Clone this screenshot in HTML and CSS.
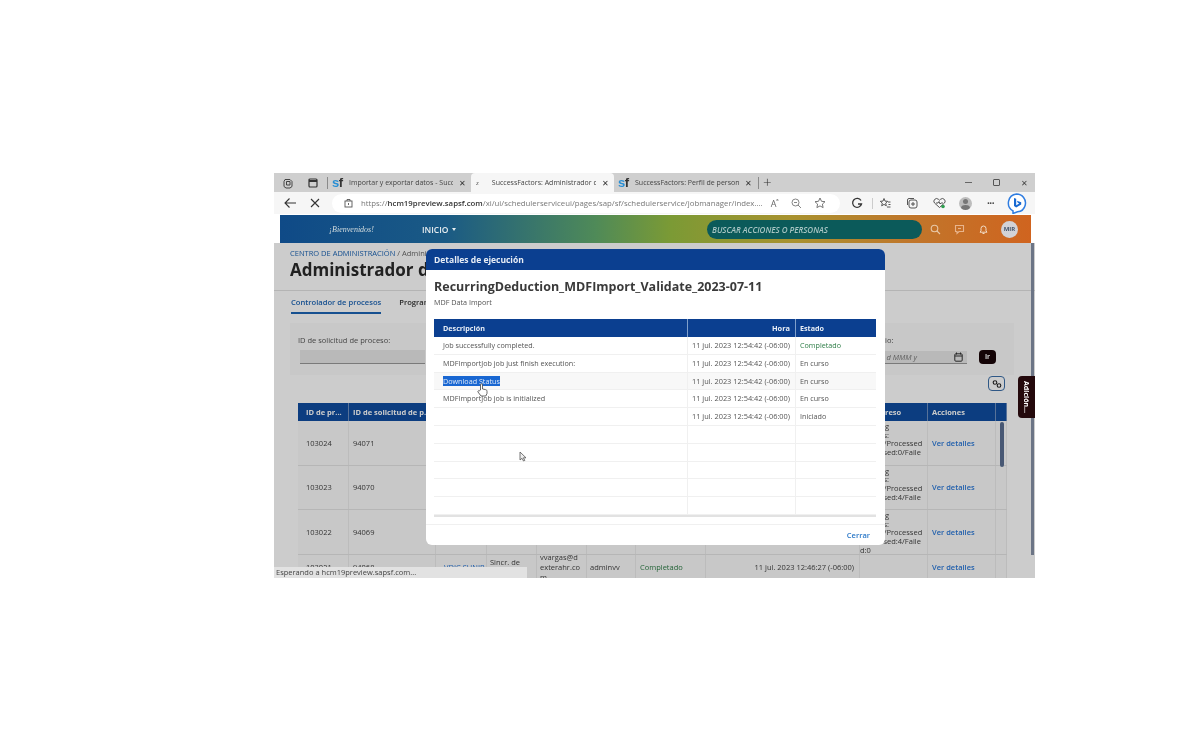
FILE: index.html
```html
<!DOCTYPE html>
<html>
<head>
<meta charset="UTF-8">
<title>SuccessFactors: Administrador de procesos</title>
<link rel="stylesheet" href="styles.css">
</head>
<body>

<div class="window">

  <!-- tab strip -->
  <div class="tabstrip">
    <svg class="tool" width="12" height="12" viewBox="0 0 12 12" fill="none" stroke="#444" stroke-width="1"><path d="M3 2.500h5l2 2v5l-2 1.500H4L2 9.500v-5z"/><path d="M4.500 4.500h3.500v3.500h-3.500z"/></svg>
    <svg class="tool tool-wide" width="12" height="12" viewBox="0 0 12 12" fill="none" stroke="#333" stroke-width="1.200"><rect x="2" y="2" width="8" height="8" rx="1"/><path d="M2 4h8" stroke-width="2"/></svg>
    <span class="tab-sep"></span>
    <div class="tab">
      <span class="sf"><i>s</i><b>f</b></span>
      <span class="tab-name">Importar y exportar datos - Succ</span>
      <span class="tab-x">✕</span>
    </div>
    <div class="tab tab-active">
      <span class="sf-small">z</span>
      <span class="tab-name">SuccessFactors: Administrador d</span>
      <span class="tab-x">✕</span>
    </div>
    <div class="tab">
      <span class="sf"><i>s</i><b>f</b></span>
      <span class="tab-name">SuccessFactors: Perfil de person</span>
      <span class="tab-x">✕</span>
    </div>
    <span class="tab-sep tab-sep-end"></span>
    <span class="tab-plus">+</span>
    <div class="winctl">
      <span class="min"></span>
      <span class="max"></span>
      <span class="close">✕</span>
    </div>
  </div>

  <!-- address bar -->
  <div class="addressbar">
    <svg width="14" height="12" viewBox="0 0 14 12" fill="none" stroke="#333" stroke-width="1.100"><path d="M13 6H2M6.500 1.500L2 6l4.500 4.500"/></svg>
    <svg class="stop" width="10" height="10" viewBox="0 0 10 10" fill="none" stroke="#333" stroke-width="1.100"><path d="M1 1l8 8M9 1L1 9"/></svg>
    <div class="url">
      <svg width="9" height="10" viewBox="0 0 9 10" fill="none" stroke="#555" stroke-width=".9"><rect x="1" y="3" width="7" height="6"/><path d="M3 3V1.500h3V3M4.500 5v2"/></svg>
      <span class="url-text">https://<b>hcm19preview.sapsf.com</b>/xi/ui/schedulerserviceui/pages/sap/sf/schedulerservice/jobmanager/index....</span>
      <span class="url-icons">
        <span class="readaloud">A<sup>ᵃ</sup></span>
        <svg width="11" height="11" viewBox="0 0 11 11" fill="none" stroke="#777" stroke-width=".9"><circle cx="4.500" cy="4.500" r="3.500"/><path d="M7 7l3 3M3 4.500h3"/></svg>
        <svg width="12" height="12" viewBox="0 0 12 12" fill="none" stroke="#666" stroke-width=".9"><path d="M6 1l1.500 3.300 3.500.4-2.600 2.400.7 3.500L6 8.900l-3.100 1.700.7-3.500L1 4.700l3.500-.4z"/></svg>
      </span>
    </div>
    <div class="toolbar">
      <svg width="12" height="12" viewBox="0 0 12 12" fill="none" stroke="#333" stroke-width="1.300"><path d="M10 3.500A4.500 4.500 0 1 0 10.500 7H7"/></svg>
      <span class="bar-sep"></span>
      <svg class="fav" width="12" height="12" viewBox="0 0 12 12" fill="none" stroke="#444" stroke-width=".9"><path d="M5 1.500l1 2.600 2.700.2-2 1.800.6 2.700L5 7.400 2.700 8.800l.6-2.700-2-1.800 2.700-.2zM9 5h2.500M9.500 7.500h2M8 10h3.500"/></svg>
      <svg width="12" height="12" viewBox="0 0 12 12" fill="none" stroke="#444" stroke-width=".9"><rect x="3" y="3" width="8" height="8" rx="2"/><path d="M7 5v4M5 7h4M1.500 8V3A1.500 1.500 0 0 1 3 1.500h5"/></svg>
      <svg width="13" height="12" viewBox="0 0 13 12" fill="none" stroke="#444" stroke-width=".9"><path d="M6.500 10.500L1.500 6a2.700 2.700 0 0 1 3.800-3.800l1.200 1 1.200-1A2.700 2.700 0 0 1 11.500 6z"/><path d="M3 6h2l1-1.500L7 7l1-1h2"/><circle cx="10" cy="9.500" r="1.800" fill="#2f9e4f" stroke="none"/></svg>
      <span class="profile"><i></i><b></b></span>
      <span class="dots">···</span>
      <span class="bing">
        <svg width="21" height="21" viewBox="0 0 21 21"><path d="M10.500 1a9 9 0 0 1 8.700 11.200c-.9 3.600-4 6.200-7.700 6.500L7 20.500v-2.700A9 9 0 0 1 10.500 1z" fill="#fff" stroke="#2f7de1" stroke-width="1.500"/><path d="M8 5l2.200.8v6.400l3-1.700-1.400-.7-.9-2.100 4.300 1.500v2.300l-5 2.900L8 13z" fill="#1769d2"/></svg>
      </span>
    </div>
  </div>

  <!-- sap header -->
  <div class="siteheader">
    <span class="welcome">¡Bienvenidos!</span>
    <span class="inicio">INICIO <i></i></span>
    <div class="search">BUSCAR ACCIONES O PERSONAS</div>
    <div class="header-icons">
      <svg width="11" height="11" viewBox="0 0 11 11" fill="none" stroke="#e8c9a8" stroke-width="1.100"><circle cx="4.500" cy="4.500" r="3.300"/><path d="M7 7l3 3"/></svg>
      <svg width="11" height="11" viewBox="0 0 11 11" fill="none" stroke="#e8b48c" stroke-width="1.100"><path d="M1.500 1.500h8v6H5L3 9.500v-2H1.500z"/><path d="M4 4.500h3"/></svg>
      <svg width="11" height="11" viewBox="0 0 11 11" fill="none" stroke="#f2ddc8" stroke-width="1"><path d="M2 8.200h7L8 6.800V4.500a2.500 2.500 0 0 0-5 0v2.300zM4.500 9.500h2"/></svg>
      <span class="avatar">MIR</span>
    </div>
  </div>

  <!-- page behind the dialog -->
  <div class="page">
    <div class="breadcrumb"><span>CENTRO DE ADMINISTRACIÓN</span> / Administrador de procesos</div>
    <h1 class="pagetitle">Administrador de procesos</h1>
    <div class="tabs">
      <span class="pagetab pagetab-on">Controlador de procesos</span>
      <span class="pagetab">Programador de procesos</span>
    </div>
    <div class="filters">
      <div class="filter">
        <label>ID de solicitud de proceso:</label>
        <div class="input"></div>
      </div>
      <div class="filter filter-date">
        <label>Fecha de inicio:</label>
        <div class="date-row">
          <div class="input input-date"><em>d MMM y</em>
            <svg width="9" height="10" viewBox="0 0 9 10" fill="none" stroke="#333" stroke-width="1"><rect x=".8" y="1.800" width="7.400" height="7.400" rx="1"/><path d="M.8 4h7.400M2.500.5v2M6.500.5v2"/></svg>
          </div>
          <span class="go">Ir</span>
        </div>
      </div>
    </div>
    <div class="tablebar">
      <span class="linkbtn">
        <svg width="12" height="10" viewBox="0 0 12 10" fill="none" stroke="#222" stroke-width="1.100"><circle cx="4" cy="3.500" r="1.800"/><circle cx="8" cy="6.500" r="1.800"/></svg>
      </span>
    </div>
    <div class="jobs">
      <div class="jobs-row jobs-head">
        <span>ID de pr...</span><span>ID de solicitud de p...</span><span></span><span></span><span></span><span></span><span></span><span></span><span>Progreso</span><span>Acciones</span><span></span>
      </div>
      <div class="jobs-row job">
        <span>103024</span><span>94071</span><span></span><span></span><span></span><span></span><span></span><span></span>
        <span class="job-progress">Running<br>process:<br>Total:0/Processed<br>Processed:0/Faile</span>
        <span class="job-link">Ver detalles</span><span></span>
      </div>
      <div class="jobs-row job">
        <span>103023</span><span>94070</span><span></span><span></span><span></span><span></span><span></span><span></span>
        <span class="job-progress">Running<br>process:<br>Total:4/Processed<br>Processed:4/Faile</span>
        <span class="job-link">Ver detalles</span><span></span>
      </div>
      <div class="jobs-row job">
        <span>103022</span><span>94069</span><span></span><span></span><span></span><span></span><span></span><span></span>
        <span class="job-progress">Running<br>process:<br>Total:4/Processed<br>Processed:4/Faile<br>d:0</span>
        <span class="job-link">Ver detalles</span><span></span>
      </div>
      <div class="jobs-row job job-last">
        <span>103021</span><span>94068</span><span class="job-blue">VDIC SUNIP</span><span class="job-tight">Sincr. de<br>datos</span>
        <span class="job-tight">vvargas@d<br>exterahr.co<br>m</span><span class="job-tight">adminvv</span><span class="job-green">Completado</span>
        <span class="job-date">11 jul. 2023 12:46:27 (-06:00)</span><span></span>
        <span class="job-link">Ver detalles</span><span></span>
      </div>
    </div>
    <div class="jobs-scroll"></div>
    <div class="page-scroll"></div>
    <div class="side-tab">Adición...</div>
    <div class="status">Esperando a hcm19preview.sapsf.com...</div>
    <div class="dim"></div>
  </div>

  <!-- dialog -->
  <div class="dialog">
    <div class="dialog-head">Detalles de ejecución</div>
    <div class="dialog-body">
      <h2 class="dialog-title">RecurringDeduction_MDFImport_Validate_2023-07-11</h2>
      <div class="dialog-sub">MDF Data Import</div>
      <div class="log">
        <div class="log-row log-head"><span>Descripción</span><span class="log-time">Hora</span><span>Estado</span></div>
        <div class="log-row"><span>Job successfully completed.</span><span class="log-time">11 jul. 2023 12:54:42 (-06:00)</span><span class="ok">Completado</span></div>
        <div class="log-row"><span>MDFImportJob job just finish execution:</span><span class="log-time">11 jul. 2023 12:54:42 (-06:00)</span><span>En curso</span></div>
        <div class="log-row log-hover"><span><mark>Download Status</mark></span><span class="log-time">11 jul. 2023 12:54:42 (-06:00)</span><span>En curso</span></div>
        <div class="log-row"><span>MDFImportJob job is initialized</span><span class="log-time">11 jul. 2023 12:54:42 (-06:00)</span><span>En curso</span></div>
        <div class="log-row"><span></span><span class="log-time">11 jul. 2023 12:54:42 (-06:00)</span><span>Iniciado</span></div>
        <div class="log-row"><span></span><span></span><span></span></div>
        <div class="log-row"><span></span><span></span><span></span></div>
        <div class="log-row"><span></span><span></span><span></span></div>
        <div class="log-row"><span></span><span></span><span></span></div>
        <div class="log-row"><span></span><span></span><span></span></div>
      </div>
      <div class="log-end"></div>
    </div>
    <div class="dialog-foot"><span>Cerrar</span></div>
  </div>

  <!-- pointers from the recording -->
  <svg class="hand" width="11" height="14" viewBox="0 0 11 14" fill="#fff" stroke="#444" stroke-width=".8"><path d="M3.500 7V1.800a1 1 0 0 1 2 0V6l3 .6c1 .2 1.500.8 1.500 1.800v2L8.800 13H4L1 9c-.5-.8.500-1.700 1.200-1.100z"/></svg>
  <svg class="arrow" width="8" height="11" viewBox="0 0 8 11" fill="#eee" stroke="#555" stroke-width=".8"><path d="M1 1v8l2-1.700L4.500 10l1.300-.6L4.400 6.800H7z"/></svg>
</div>

</body>
</html>
```
FILE: styles.css
```css
html, body {
  margin: 0;
  height: 100%;
  background: white;
  overflow: hidden;
}
body {
  padding: 173px 0 0 274px;
  box-sizing: border-box;
  font-family: "Open Sans", "Liberation Sans", sans-serif;
}
.window {
  position: relative;
  width: 761px;
  height: 405px;
  overflow: hidden;
  display: flex;
  flex-direction: column;
  background: #fff;
  filter: blur(0.5px);
}

/* tab strip */
.tabstrip {
  height: 19px;
  flex: none;
  display: flex;
  align-items: center;
  background: #cfcfcf;
  color: #444;
  font-size: 7px;
}
.tool { margin-left: 8px; }
.tool-wide { margin-left: 13px; }
.tab-sep {
  width: 1px;
  height: 12px;
  margin-left: 8px;
  background: #8a8a8a;
}
.tab-sep-end { margin-left: 1px; }
.tab {
  width: 143px;
  height: 19px;
  box-sizing: border-box;
  padding-left: 4px;
  display: flex;
  align-items: center;
  white-space: nowrap;
}
.tab-active {
  background: #f6f6f6;
  border-radius: 4px 4px 0 0;
  padding-left: 5px;
}
.tab-name {
  flex: 1;
  overflow: hidden;
  margin-left: 5px;
}
.tab-active .tab-name { margin-left: 13px; }
.tab-x {
  width: 18px;
  font-size: 8px;
  color: #333;
  text-align: center;
}
.sf {
  width: 12px;
  font-family: "Liberation Sans", sans-serif;
  font-size: 13px;
  line-height: 1;
  font-weight: 700;
  letter-spacing: -0.5px;
}
.sf i { font-style: normal; color: #2a8fd4; }
.sf b { color: #333; }
.sf-small { font-size: 6px; }
.tab-plus {
  margin-left: 4px;
  font-size: 15px;
  font-weight: 300;
  line-height: 1;
  color: #333;
}
.winctl {
  margin-left: auto;
  display: flex;
  align-items: center;
  gap: 21px;
  padding-right: 7px;
}
.winctl .min {
  width: 7px;
  height: 1px;
  background: #666;
}
.winctl .max {
  width: 5px;
  height: 5px;
  border: 1px solid #555;
  border-radius: 1px;
}
.winctl .close { font-size: 8px; color: #444; }

/* address bar */
.addressbar {
  height: 22px;
  flex: none;
  display: flex;
  align-items: center;
  padding-left: 9px;
  background: #f6f6f6;
}
.stop { margin-left: 13px; }
.url {
  width: 508px;
  height: 19px;
  margin-left: 12px;
  padding-left: 12px;
  box-sizing: border-box;
  display: flex;
  align-items: center;
  background: #fff;
  border-radius: 10px;
}
.url-text {
  margin-left: 8px;
  font-size: 7.800px;
  color: #777;
  white-space: nowrap;
}
.url-text b { font-weight: 600; color: #333; }
.url-icons {
  margin-left: 8px;
  display: flex;
  align-items: center;
  gap: 12px;
}
.readaloud { font-size: 9px; color: #666; line-height: 1; }
.readaloud sup { font-size: 6px; }
.toolbar {
  margin-left: 11px;
  display: flex;
  align-items: center;
  gap: 15px;
}
.bar-sep {
  width: 1px;
  height: 11px;
  margin: 0 -6px;
  background: #ccc;
}
.fav { margin-left: -3px; }
.profile {
  width: 13px;
  height: 13px;
  margin-left: -2px;
  border-radius: 50%;
  background: #bdbdbd;
  position: relative;
  overflow: hidden;
}
.profile i {
  position: absolute;
  left: 4px;
  top: 2px;
  width: 5px;
  height: 5px;
  border-radius: 50%;
  background: #777;
}
.profile b {
  position: absolute;
  left: 2px;
  top: 8px;
  width: 9px;
  height: 6px;
  border-radius: 50%;
  background: #777;
}
.dots { font-size: 10px; font-weight: 700; color: #444; letter-spacing: -.5px; }
.bing { margin-left: -3px; display: flex; }

/* sap header */
.siteheader {
  height: 28px;
  flex: none;
  margin: 1px 4px 0 6px;
  display: flex;
  align-items: center;
  background: linear-gradient(90deg, #0f4a87 0%, #1a5a85 22%, #4f8a58 42%, #7b9a35 52%, #a8922f 68%, #c0762b 84%, #d0641f 100%);
  color: #e7edf0;
}
.welcome {
  width: 45px;
  margin-left: 49px;
  font-family: "Liberation Serif", serif;
  font-style: italic;
  font-size: 8px;
  white-space: nowrap;
  color: #d7dfe0;
}
.inicio {
  width: 35px;
  margin-left: 48px;
  font-size: 8.500px;
  font-weight: 600;
  display: flex;
  align-items: center;
  gap: 3px;
}
.inicio i {
  border: 2.500px solid transparent;
  border-top: 3px solid #e7edf0;
  border-bottom: 0;
}
.search {
  width: 215px;
  height: 19px;
  margin-left: 250px;
  padding-left: 5px;
  box-sizing: border-box;
  display: flex;
  align-items: center;
  background: #0b5a5a;
  border-radius: 10px;
  color: #a9c6c4;
  font-size: 8px;
  font-style: italic;
  font-weight: 600;
}
.header-icons {
  margin-left: 8px;
  display: flex;
  align-items: center;
  gap: 13px;
}
.avatar {
  width: 17px;
  height: 17px;
  margin-left: -1px;
  border-radius: 50%;
  background: #d2d2d6;
  color: #44546a;
  font-size: 6px;
  font-weight: 700;
  line-height: 17px;
  text-align: center;
}

/* page behind the dialog */
.page {
  position: relative;
  flex: 1;
  min-height: 0;
  padding: 5px 0 0 16px;
  overflow: hidden;
  background: #fff;
  color: #333;
  font-size: 7.500px;
}
.breadcrumb { font-size: 7.500px; color: #666; line-height: 10px; white-space: nowrap; }
.breadcrumb span { color: #1c64b4; }
.pagetitle {
  margin: 0;
  font-size: 17px;
  font-weight: 700;
  line-height: 24px;
  color: #2a2a2a;
  white-space: nowrap;
}
.tabs {
  height: 22px;
  margin: 8px 0 0 -16px;
  padding-left: 17px;
  display: flex;
  gap: 18px;
  border-top: 1px solid #e2e2e2;
  align-items: center;
}
.pagetab { font-size: 7.600px; font-weight: 600; color: #333; white-space: nowrap; }
.pagetab-on { color: #1c64b4; position: relative; }
.pagetab-on::after {
  content: "";
  position: absolute;
  left: 0;
  right: 0;
  bottom: -7px;
  height: 2px;
  background: #1c64b4;
}
.filters {
  width: 724px;
  height: 52px;
  margin-top: 10px;
  padding: 12px 18px 0 8px;
  box-sizing: border-box;
  display: flex;
  justify-content: space-between;
  background: #fbfbfb;
}
.filter label { display: block; color: #555; font-size: 7.500px; line-height: 10px; }
.input {
  width: 125px;
  height: 13px;
  margin-top: 5px;
  margin-left: 2px;
  background: #e8e8e8;
  border-bottom: 1px solid #999;
}
.date-row { display: flex; align-items: center; gap: 12px; }
.input-date {
  width: 127px;
  margin-left: 0;
  display: flex;
  align-items: center;
  justify-content: flex-end;
  padding-right: 4px;
  box-sizing: border-box;
  gap: 37px;
  color: #777;
}
.input-date em { font-size: 7.500px; }
.go {
  width: 17px;
  height: 14px;
  margin-top: 5px;
  border-radius: 4px;
  background: #1a0608;
  color: #fff;
  font-size: 6.500px;
  font-weight: 700;
  line-height: 14px;
  text-align: center;
}
.tablebar {
  width: 715px;
  height: 28px;
  padding-top: 1px;
  box-sizing: border-box;
  display: flex;
  justify-content: flex-end;
}
.linkbtn {
  width: 15px;
  height: 13px;
  border: 1px solid #3b6ea8;
  border-radius: 4px;
  display: flex;
  align-items: center;
  justify-content: center;
  background: #fff;
}
.jobs { width: 709px; margin-left: 8px; }
.jobs-row {
  display: grid;
  grid-template-columns: 51px 87px 51px 50px 50px 49px 70px 154px 68px 68px 11px;
}
.jobs-head {
  height: 18px;
  background: #0f4da0;
  color: #fff;
  font-weight: 700;
  font-size: 7.500px;
  line-height: 18px;
}
.jobs-head span { padding-left: 8px; border-right: 1px solid #6d8fc0; white-space: nowrap; overflow: hidden; }
.jobs-head span:nth-child(2), .jobs-head span:nth-child(10) { padding-left: 4px; }
.job {
  height: 44.500px;
  box-sizing: border-box;
  align-items: stretch;
  border-bottom: 1px solid #e4e4e4;
  color: #444;
  background: #fafafa;
}
.job span {
  display: flex;
  align-items: center;
  padding-left: 8px;
  border-right: 1px solid #ececec;
  white-space: nowrap;
  overflow: hidden;
  line-height: 10px;
}
.job span:nth-child(2) { padding-left: 4px; }
.job .job-tight { padding-left: 3px; }
.job .job-progress { display: block; padding: 1px 0 0 0; line-height: 8.700px; }
.job .job-blue { color: #2a78d8; }
.job .job-green { color: #2d7d46; padding-left: 4px; }
.job .job-date { justify-content: flex-end; padding-right: 5px; }
.job .job-link { color: #2a78d8; font-weight: 600; padding-left: 4px; }
.job-last { height: 26px; }
.jobs-scroll {
  position: absolute;
  left: 726px;
  top: 179px;
  width: 4px;
  height: 45px;
  border-radius: 2px;
  background: #5a6f92;
}
.page-scroll {
  position: absolute;
  right: 1px;
  top: 0;
  width: 3px;
  height: 312px;
  background: #8793a8;
}
.side-tab {
  position: absolute;
  right: 0;
  top: 133px;
  width: 17px;
  height: 42px;
  border-radius: 4px 0 0 4px;
  background: #24090c;
  color: #fff;
  font-size: 7px;
  font-weight: 700;
  writing-mode: vertical-rl;
  text-align: center;
  line-height: 17px;
  z-index: 2;
}
.status {
  position: absolute;
  left: 0;
  bottom: 0;
  width: 251px;
  height: 11px;
  padding-left: 2px;
  background: #e2e2e2;
  color: #444;
  font-size: 7.500px;
  line-height: 11px;
  z-index: 2;
}
.dim {
  position: absolute;
  left: 0;
  top: 0;
  right: 0;
  bottom: 0;
  background: rgba(0, 0, 0, 0.2);
  z-index: 1;
}

/* dialog */
.dialog {
  position: absolute;
  left: 152px;
  top: 76px;
  width: 459px;
  height: 296px;
  display: flex;
  flex-direction: column;
  background: #fff;
  border-radius: 6px;
  overflow: hidden;
  z-index: 3;
}
.dialog-head {
  height: 21px;
  flex: none;
  padding-left: 8px;
  background: #0b3f90;
  color: #e8eef6;
  font-size: 8.500px;
  font-weight: 700;
  line-height: 21px;
}
.dialog-body { flex: 1; padding: 9px 9px 0 8px; }
.dialog-title {
  margin: 0;
  font-size: 12.500px;
  font-weight: 700;
  line-height: 16px;
  color: #3a3a3a;
  white-space: nowrap;
}
.dialog-sub { margin-top: 2px; font-size: 7.200px; line-height: 11px; color: #555; }
.log { margin-top: 11px; font-size: 7.200px; color: #555; }
.log-row {
  height: 17.800px;
  display: grid;
  grid-template-columns: 254px 108px 80px;
  box-sizing: border-box;
  border-bottom: 1px solid #f0f0f0;
  line-height: 17.500px;
}
.log-row span {
  padding-left: 9px;
  border-right: 1px solid #f0f0f0;
  white-space: nowrap;
  overflow: hidden;
}
.log-row span:last-child { padding-left: 4px; border-right: 0; }
.log-row .log-time { padding: 0 5px 0 0; text-align: right; font-size: 7.400px; }
.log-head {
  height: 18px;
  background: #0b3f90;
  color: #e8eef6;
  font-weight: 700;
  line-height: 18px;
  border-bottom: 0;
}
.log-head span { border-right: 1px solid #7f9fcb; }
.log-hover { background: #f8f8f8; }
.ok { color: #2d7d46; }
mark { background: #1967d2; color: #dfe9f8; }
.log-end { height: 2px; background: #e2e2e2; }
.dialog-foot {
  height: 21px;
  flex: none;
  box-sizing: border-box;
  padding-right: 15px;
  border-top: 1px solid #f0f0f0;
  display: flex;
  align-items: center;
  justify-content: flex-end;
  color: #2a78c8;
  font-size: 7.500px;
  font-weight: 600;
}

/* pointers */
.hand { position: absolute; left: 203px; top: 210px; z-index: 4; }
.arrow { position: absolute; left: 245px; top: 278px; z-index: 4; }
```
